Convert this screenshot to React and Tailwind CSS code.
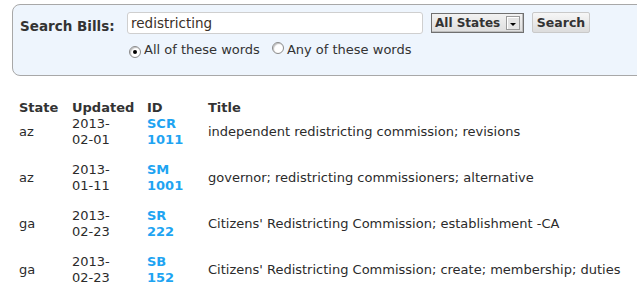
import React from "react";

const rows = [
  { st: "az", d1: "2013-", d2: "02-01", id1: "SCR", id2: "1011", title: "independent redistricting commission; revisions" },
  { st: "az", d1: "2013-", d2: "01-11", id1: "SM", id2: "1001", title: "governor; redistricting commissioners; alternative" },
  { st: "ga", d1: "2013-", d2: "02-23", id1: "SR", id2: "222", title: "Citizens' Redistricting Commission; establishment -CA" },
  { st: "ga", d1: "2013-", d2: "02-23", id1: "SB", id2: "152", title: "Citizens' Redistricting Commission; create; membership; duties" },
];

function Radio({ checked }) {
  return (
    <span className="relative inline-flex h-[12px] w-[12px] items-center justify-center rounded-full border border-[#8a8a8a] bg-white shadow-[inset_1px_1px_1px_rgba(0,0,0,0.25)]">
      {checked && <span className="h-[4px] w-[4px] rounded-full bg-black" />}
    </span>
  );
}

export default function App() {
  return (
    <div className="w-[637px] h-[293px] overflow-hidden bg-white text-[#333] font-['DejaVu_Sans',Verdana,sans-serif]">
      <div className="pt-[4px] pl-[12px]">
        <div className="w-[660px] h-[72px] rounded-[8px] border border-[#a8a8a8] bg-[#eef5fd] flex pt-[7px] pl-[7px]">
          <div className="w-[107px] pt-[6px] text-[13.5px] font-bold leading-[16px] text-[#333] whitespace-nowrap">Search Bills:</div>
          <div className="flex flex-col">
            <div className="flex items-start">
              <div className="h-[22px] w-[296px] rounded-[3px] border border-[#cfcfcf] bg-white pl-[3px] text-[13.5px] leading-[20px] text-[#3a2f28]">
                redistricting
              </div>
              <div className="ml-[8px] mt-[1px] flex h-[20px] w-[93px] items-center border border-[#707070] bg-gradient-to-b from-[#f2f2f2] to-[#dedede] pl-[3px] pr-[3px] shadow-[inset_-1px_-1px_0_#bdbdbd]">
                <span className="whitespace-nowrap text-[12px] font-bold leading-[16px] text-[#333]">All States</span>
                <span className="ml-auto flex h-[14px] w-[14px] items-center justify-center border border-[#9a9a9a] bg-[#e4e4e4] shadow-[inset_1px_1px_0_#fff]">
                  <span className="mt-[2px] h-0 w-0 border-x-[3px] border-t-[3px] border-x-transparent border-t-black" />
                </span>
              </div>
              <div className="ml-[8px] flex h-[21px] w-[58px] items-center justify-center rounded-[2px] border border-[#c9c9c9] bg-gradient-to-b from-[#f7f7f7] to-[#dcdcdc] text-[12.5px] font-bold leading-[16px] text-[#333]">
                Search
              </div>
            </div>
            <div className="mt-[8px] flex items-center text-[13px] leading-[16px] text-[#333]">
              <span className="ml-[2px]"><Radio checked /></span>
              <span className="ml-[3px]">All of these words</span>
              <span className="ml-[12px]"><Radio /></span>
              <span className="ml-[3px]">Any of these words</span>
            </div>
          </div>
        </div>
      </div>

      <div className="mt-[24px] pl-[19px] text-[13px] leading-[16px]">
        <div className="grid grid-cols-[53px_75px_61px_1fr] font-bold text-[#333]">
          <div>State</div>
          <div>Updated</div>
          <div>ID</div>
          <div>Title</div>
        </div>
        {rows.map((r, i) => (
          <div key={i} className="grid grid-cols-[53px_75px_61px_1fr] items-center pb-[14px] text-[#2b2b2b]">
            <div>{r.st}</div>
            <div>
              <div>{r.d1}</div>
              <div>{r.d2}</div>
            </div>
            <div className="font-bold text-[#1ea4f2]">
              <div>{r.id1}</div>
              <div>{r.id2}</div>
            </div>
            <div className="whitespace-nowrap">{r.title}</div>
          </div>
        ))}
      </div>
    </div>
  );
}
